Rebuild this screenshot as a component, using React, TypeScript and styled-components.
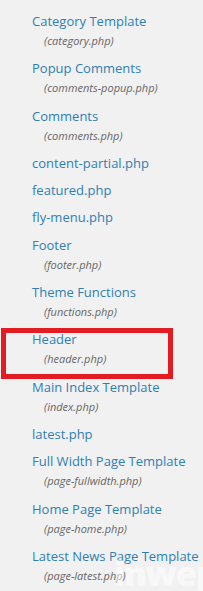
import React from "react";
import styled, { createGlobalStyle } from "styled-components";

const Global = createGlobalStyle`
  html, body { margin: 0; padding: 0; background: #f1f1f1; }
  body { font-family: "Open Sans", "Liberation Sans", sans-serif; overflow: hidden; }
`;

const Page = styled.div`
  position: relative;
  width: 203px;
  height: 591px;
  background: #f1f1f1;
  overflow: hidden;
`;

const List = styled.ul`
  list-style: none;
  margin: 0;
  padding: 11px 0 0 32px;
  display: flex;
  flex-direction: column;
  gap: 7.3px;
`;

const Item = styled.li`
  position: relative;
  display: flex;
  flex-direction: column;
`;

const Title = styled.a`
  display: block;
  font-size: 13px;
  line-height: 20px;
  color: #2f7fb3;
  text-decoration: none;
  white-space: nowrap;
`;

const File = styled.span`
  display: block;
  padding-left: 12px;
  font-size: 11px;
  line-height: 20px;
  font-style: italic;
  color: #666;
  white-space: nowrap;
`;

const Highlight = styled.div`
  position: absolute;
  left: -31px;
  top: -1px;
  width: 172px;
  height: 51px;
  box-sizing: border-box;
  border: 5px solid #e31b23;
  pointer-events: none;
`;

const Watermark = styled.div`
  position: absolute;
  left: 114px;
  top: 550px;
  font-family: "Open Sans", "Liberation Sans", sans-serif;
  font-weight: 800;
  font-size: 34px;
  letter-spacing: -1px;
  color: rgba(255, 255, 255, 0.55);
  pointer-events: none;
  white-space: nowrap;
`;

type Entry = { title: string; file?: string; highlight?: boolean };

const entries: Entry[] = [
  { title: "Category Template", file: "(category.php)" },
  { title: "Popup Comments", file: "(comments-popup.php)" },
  { title: "Comments", file: "(comments.php)" },
  { title: "content-partial.php" },
  { title: "featured.php" },
  { title: "fly-menu.php" },
  { title: "Footer", file: "(footer.php)" },
  { title: "Theme Functions", file: "(functions.php)" },
  { title: "Header", file: "(header.php)", highlight: true },
  { title: "Main Index Template", file: "(index.php)" },
  { title: "latest.php" },
  { title: "Full Width Page Template", file: "(page-fullwidth.php)" },
  { title: "Home Page Template", file: "(page-home.php)" },
  { title: "Latest News Page Template", file: "(page-latest.php)" },
];

export default function App() {
  return (
    <Page>
      <Global />
      <List>
        {entries.map((e) => (
          <Item key={e.title}>
            <Title href="#">{e.title}</Title>
            {e.file && <File>{e.file}</File>}
            {e.highlight && <Highlight />}
          </Item>
        ))}
      </List>
      <Watermark>inwepo</Watermark>
    </Page>
  );
}
